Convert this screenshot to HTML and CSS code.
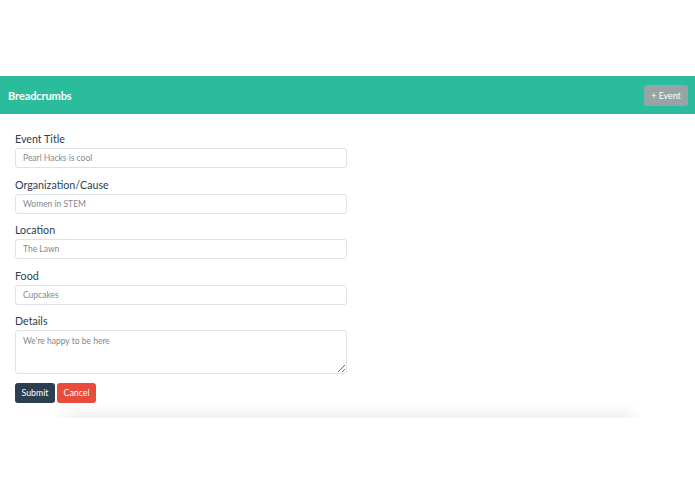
FILE: index.html
```html
<!DOCTYPE html>
<html>
<head>
<meta charset="utf-8">
<link rel="stylesheet" href="styles.css">
</head>
<body>
<div class="page">
  <nav class="navbar">
    <span class="brand">Breadcrumbs</span>
    <button class="btn btn-gray">+ Event</button>
  </nav>
  <form class="event-form">
    <div class="group">
      <label class="lbl">Event Title</label>
      <input class="field" type="text" placeholder="Pearl Hacks is cool">
    </div>
    <div class="group">
      <label class="lbl">Organization/Cause</label>
      <input class="field" type="text" placeholder="Women in STEM">
    </div>
    <div class="group">
      <label class="lbl">Location</label>
      <input class="field" type="text" placeholder="The Lawn">
    </div>
    <div class="group">
      <label class="lbl">Food</label>
      <input class="field" type="text" placeholder="Cupcakes">
    </div>
    <div class="group last">
      <label class="lbl">Details</label>
      <textarea class="field area" placeholder="We're happy to be here"></textarea>
    </div>
    <div class="actions">
      <button type="button" class="btn btn-dark">Submit</button>
      <button type="button" class="btn btn-red">Cancel</button>
    </div>
  </form>
  <div class="shade"></div>
</div>
</body>
</html>
```
FILE: styles.css
```css
* { box-sizing: border-box; }
html, body { margin: 0; padding: 0; background: #fff; }
body { font-family: Lato, "Open Sans", sans-serif; color: #2c3e50; }
.page { padding-top: 76px; }
.navbar {
  height: 38px;
  background: #2abc9c;
  display: flex;
  align-items: center;
  justify-content: space-between;
  padding: 0 7px 0 8px;
}
.brand { color: #fff; font-weight: 700; font-size: 11px; letter-spacing: -0.1px; }
.btn {
  border: none;
  border-radius: 3px;
  color: #fff;
  font-family: Lato, sans-serif;
  font-size: 8.8px;
  height: 20px;
  padding: 0;
  cursor: pointer;
}
.btn-gray { background: #95a5a6; width: 44px; height: 21px; margin-top: 1px; }
.btn-dark { background: #2c3e50; width: 40px; }
.btn-red { background: #e74c3c; width: 39px; }
.event-form { padding: 18px 0 0 15px; width: 347px; }
.group { display: flex; flex-direction: column; margin-bottom: 9.3px; }
.group.last { margin-bottom: 8.5px; }
.lbl { font-size: 10.7px; line-height: 13px; margin-bottom: 3px; color: #2c3e50; }
.field {
  height: 20.3px;
  border: 1px solid #dce2e6;
  border-radius: 3px;
  padding: 0 7px;
  font-family: Lato, sans-serif;
  font-size: 8.5px;
  color: #2c3e50;
  outline: none;
}
.field::placeholder { color: #7f8a90; }
.area { height: 44px; padding-top: 5px; resize: vertical; }
.actions { display: flex; gap: 2px; }
.shade {
  margin: 0 53px 0 50px;
  height: 15px;
  background: linear-gradient(to bottom, rgba(0,0,0,0), rgba(0,0,0,0.055));
  -webkit-mask-image: linear-gradient(to right, transparent, #000 30px, #000 calc(100% - 20px), transparent);
  mask-image: linear-gradient(to right, transparent, #000 30px, #000 calc(100% - 20px), transparent);
}
```
